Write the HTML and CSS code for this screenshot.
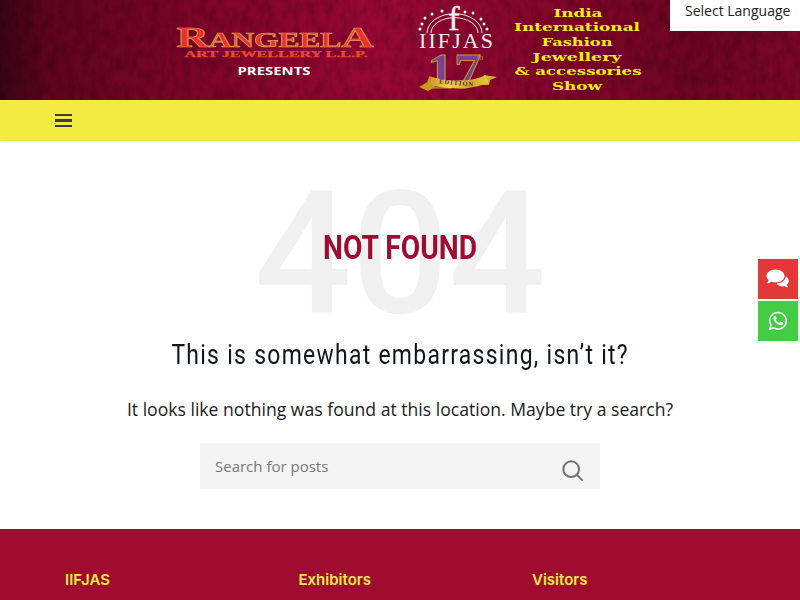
FILE: index.html
```html
<!DOCTYPE html>
<html>
<head>
  <title>Not Found</title>
  <meta name="viewport" content="width=device-width, initial-scale=1">
  <link rel="stylesheet" href="styles.css">
</head>
<body>
  <header class="banner">
    <svg class="banner-art" width="800" height="100" viewBox="0 0 800 100">
      <defs>
        <linearGradient id="velvet" x1="0" x2="1" y1="0" y2="0">
          <stop offset="0" stop-color="#3a0416"/>
          <stop offset="0.06" stop-color="#5e041e"/>
          <stop offset="0.25" stop-color="#7e0529"/>
          <stop offset="0.48" stop-color="#980836"/>
          <stop offset="0.7" stop-color="#82062b"/>
          <stop offset="0.86" stop-color="#6c0522"/>
          <stop offset="1" stop-color="#7a0628"/>
        </linearGradient>
        <filter id="grain" x="0" y="0" width="100%" height="100%">
          <feTurbulence type="fractalNoise" baseFrequency="0.12 0.07" numOctaves="4" seed="4"/>
          <feColorMatrix values="0 0 0 0 0  0 0 0 0 0  0 0 0 0 0  1.4 0 0 0 -0.52"/>
        </filter>
        <linearGradient id="gold" x1="0" x2="1" y1="0" y2="0">
          <stop offset="0" stop-color="#c2941c"/>
          <stop offset="0.35" stop-color="#f5d245"/>
          <stop offset="0.7" stop-color="#d0a528"/>
          <stop offset="1" stop-color="#e9c23a"/>
        </linearGradient>
      </defs>
      <rect width="800" height="100" fill="url(#velvet)"/>
      <rect width="800" height="100" filter="url(#grain)" opacity="0.3"/>

      <text class="logo-name" x="275" y="47" text-anchor="middle" textLength="197" lengthAdjust="spacingAndGlyphs">RangeelA</text>
      <text class="logo-sub" x="276" y="56.500" text-anchor="middle" textLength="183" lengthAdjust="spacingAndGlyphs">ART JEWELLERY L.L.P.</text>
      <text class="logo-presents" x="274" y="74.500" text-anchor="middle" textLength="73" lengthAdjust="spacingAndGlyphs">PRESENTS</text>

      <g fill="none" stroke="#efe6e6" stroke-width="1">
        <path d="M427 33a27 19 0 0 1 55 0"/>
        <path d="M431 33a23 15 0 0 1 47 0"/>
      </g>
      <g fill="#fff">
        <circle cx="420" cy="29" r="1.500"/><circle cx="422" cy="24" r="1.500"/><circle cx="425" cy="18" r="1.500"/>
        <circle cx="432" cy="14" r="1.500"/><circle cx="442" cy="11" r="1.500"/><circle cx="465" cy="12" r="1.500"/>
        <circle cx="473" cy="13" r="1.500"/><circle cx="481" cy="19" r="1.500"/><circle cx="484" cy="24" r="1.500"/>
        <circle cx="487" cy="29" r="1.500"/>
      </g>
      <text class="logo-f" x="454" y="30" text-anchor="middle">f</text>
      <text class="logo-iifjas" x="456" y="48" text-anchor="middle" textLength="74" lengthAdjust="spacing">IIFJAS</text>
      <text class="logo-seventeen" x="454" y="88" text-anchor="middle" textLength="54" lengthAdjust="spacingAndGlyphs">17</text>
      <text class="logo-th" x="477" y="60">th</text>
      <path d="M419 87l12-7 4 7-7 4z" fill="#c9981f"/>
      <path d="M484 75l13 2-7 3-1 5-8 0z" fill="#d9ad2c"/>
      <path d="M428 80C440 84 455 85 468 84C478 83 482 81 487 79" fill="none" stroke="url(#gold)" stroke-width="8"/>
      <text class="logo-edition" x="456" y="85" text-anchor="middle" transform="rotate(5 456 85)" textLength="34" lengthAdjust="spacing">EDITION</text>

      <text class="show-line" x="578" y="17" text-anchor="middle" textLength="49" lengthAdjust="spacingAndGlyphs">India</text>
      <text class="show-line" x="577" y="31" text-anchor="middle" textLength="126" lengthAdjust="spacingAndGlyphs">International</text>
      <text class="show-line" x="577" y="46" text-anchor="middle" textLength="71" lengthAdjust="spacingAndGlyphs">Fashion</text>
      <text class="show-line" x="577" y="61" text-anchor="middle" textLength="89" lengthAdjust="spacingAndGlyphs">Jewellery</text>
      <text class="show-line" x="578" y="75" text-anchor="middle" textLength="127" lengthAdjust="spacingAndGlyphs">&amp; accessories</text>
      <text class="show-line" x="577" y="90" text-anchor="middle" textLength="50" lengthAdjust="spacingAndGlyphs">Show</text>
    </svg>
    <div class="language">Select Language</div>
  </header>

  <nav class="menu-bar">
    <button class="menu-toggle" aria-label="Menu">
      <span></span><span></span><span></span>
    </button>
  </nav>

  <main class="not-found">
    <div class="title-wrap">
      <div class="big-404">404</div>
      <h1>NOT FOUND</h1>
    </div>
    <h2>This is somewhat embarrassing, isn’t it?</h2>
    <p>It looks like nothing was found at this location. Maybe try a search?</p>
    <form class="search" autocomplete="off">
      <input type="text" placeholder="Search for posts">
      <svg width="21" height="21" viewBox="0 0 24 24" fill="none" stroke="#6f6f6f" stroke-width="2.200">
        <circle cx="10.500" cy="10.500" r="9"/>
        <path d="M17 17l6 6" stroke-linecap="round"/>
      </svg>
    </form>
  </main>

  <footer class="site-footer">
    <h4>IIFJAS</h4>
    <h4>Exhibitors</h4>
    <h4>Visitors</h4>
  </footer>

  <div class="side-buttons">
    <a class="side-btn chat" href="#">
      <svg width="24" height="20" viewBox="0 0 24 20" fill="#fff">
        <path d="M9.500 0.500C4.500 0.500 0.500 3.400 0.500 7c0 1.600 0.800 3 2.100 4.100C2.300 12.500 1.500 13.500 0.700 14.300c1.800 0 3.500-0.700 4.600-1.500 1.300 0.500 2.700 0.700 4.200 0.700 5 0 9-2.900 9-6.500S14.500 0.500 9.500 0.500z"/>
        <path d="M19.700 7.300c0 4-3.900 7-9.100 7.300 1.100 1.700 3.200 2.800 5.600 2.800 0.800 0 1.600-0.100 2.300-0.400 0.900 0.700 2.200 1.300 3.800 1.300-0.700-0.700-1.300-1.500-1.600-2.600 1.300-1 2.100-2.300 2.100-3.800 0-1.900-1.200-3.500-3.100-4.600z"/>
      </svg>
    </a>
    <a class="side-btn whatsapp" href="#">
      <svg width="20" height="20" viewBox="0 0 24 24" fill="#fff">
        <path d="M12 1C6 1 1.200 5.800 1.200 11.800c0 1.900.5 3.800 1.500 5.400L1 23l6-1.600c1.600.9 3.300 1.300 5 1.300 6 0 10.900-4.900 10.900-10.900C22.900 5.800 18 1 12 1zm0 19.800c-1.600 0-3.200-.4-4.600-1.300l-.3-.2-3.500.9.900-3.400-.2-.4c-.9-1.400-1.400-3-1.400-4.700 0-4.900 4-8.900 9-8.900s9 4 9 8.900-4.100 9-8.900 9.100z"/>
        <path d="M8.300 6.800c-.2 0-.6.100-.9.400-.3.400-1.200 1.100-1.200 2.800s1.200 3.300 1.400 3.500c.2.200 2.400 3.700 5.900 5 2.900 1.100 3.500.9 4.100.8.600-.1 2-.8 2.300-1.600.3-.8.300-1.400.2-1.600-.1-.1-.3-.2-.7-.4l-2.300-1.100c-.3-.1-.5-.2-.8.200l-1.100 1.300c-.2.200-.4.300-.8.100-.3-.2-1.400-.5-2.700-1.700-1-.9-1.700-2-1.900-2.300-.2-.3 0-.5.100-.7l.5-.6c.2-.2.200-.3.300-.6.100-.2.100-.4 0-.6l-1-2.500c-.3-.6-.5-.6-.8-.6z" transform="translate(1.300 0.600) scale(.84)"/>
      </svg>
    </a>
  </div>
</body>
</html>
```

FILE: styles.css
```css
* {
  box-sizing: border-box;
}

html, body {
  margin: 0;
  padding: 0;
}

body {
  position: relative;
  font-family: "Open Sans", sans-serif;
  color: #111;
  background: #fff;
}

.banner {
  position: relative;
  height: 100px;
}

.banner-art {
  display: block;
}

.logo-name {
  font-family: "Liberation Serif", serif;
  font-size: 30px;
  font-weight: bold;
  font-variant: small-caps;
  fill: #f02e30;
  stroke: #dca24c;
  stroke-width: .7px;
}

.logo-sub {
  font-family: "Liberation Serif", serif;
  font-size: 8px;
  font-weight: bold;
  fill: #e84a2c;
  stroke: #e84a2c;
  stroke-width: .25px;
}

.logo-presents {
  font-family: "Open Sans", sans-serif;
  font-size: 10px;
  font-weight: bold;
  fill: #fff;
}

.logo-f {
  font-family: "Liberation Serif", serif;
  font-size: 34px;
  fill: #f5f0f0;
  stroke: #f5f0f0;
  stroke-width: .4px;
}

.logo-iifjas {
  font-family: "Liberation Serif", serif;
  font-size: 22px;
  fill: #f2eded;
}

.logo-seventeen {
  font-family: "Liberation Serif", serif;
  font-size: 50px;
  font-weight: bold;
  fill: #7b3f98;
  stroke: #c19a2e;
  stroke-width: 1px;
}

.logo-th {
  font-family: "Liberation Serif", serif;
  font-size: 8px;
  fill: #b88b3a;
}

.logo-edition {
  font-family: "Liberation Serif", serif;
  font-size: 6.500px;
  font-weight: bold;
  fill: #4f2468;
}

.show-line {
  font-family: "DejaVu Serif", serif;
  font-size: 11.500px;
  font-weight: bold;
  fill: #f6ee12;
}

.language {
  position: absolute;
  top: 0;
  right: 0;
  width: 130px;
  height: 31px;
  padding: 1px 0 0 15px;
  background: #fff;
  font-size: 14px;
  line-height: 20px;
  color: #222;
}

.menu-bar {
  display: flex;
  align-items: center;
  height: 41px;
  padding-left: 55px;
  background: #f3ea42;
  box-shadow: 0 1px 3px rgba(0, 0, 0, .06);
}

.menu-toggle {
  display: flex;
  flex-direction: column;
  gap: 3px;
  padding: 0;
  border: 0;
  background: none;
}

.menu-toggle span {
  display: block;
  width: 17px;
  height: 2.500px;
  background: #3c3c3c;
}

.not-found {
  display: flex;
  flex-direction: column;
  align-items: center;
  height: 388px;
  padding-top: 33px;
}

.title-wrap {
  position: relative;
  width: 400px;
  height: 161px;
  text-align: center;
}

.big-404 {
  font-family: Roboto, sans-serif;
  font-size: 171px;
  font-weight: 500;
  line-height: 160px;
  color: #f0f0f0;
}

.title-wrap h1 {
  position: absolute;
  top: 51px;
  left: 0;
  right: 0;
  margin: 0;
  font-family: Roboto, sans-serif;
  font-size: 34px;
  font-weight: bold;
  line-height: 44px;
  color: #a00c30;
  transform: scaleX(.83);
}

h2 {
  margin: 0;
  font-family: Roboto, sans-serif;
  font-size: 27px;
  font-weight: normal;
  line-height: 40px;
  letter-spacing: 1.500px;
  color: #0e1420;
  white-space: nowrap;
  transform: scaleX(.85);
}

.not-found p {
  margin: 22px 0 0;
  font-size: 17.600px;
  line-height: 24px;
  color: #1b1b1b;
}

.search {
  display: flex;
  justify-content: space-between;
  align-items: center;
  width: 400px;
  height: 46px;
  margin-top: 22px;
  padding: 0 17px 0 15px;
  background: #f4f4f4;
}

.search input {
  flex: 1;
  border: 0;
  outline: 0;
  padding: 0;
  background: none;
  font-family: "Open Sans", sans-serif;
  font-size: 15px;
}

.search input::placeholder {
  color: #777;
  opacity: 1;
}

.search svg {
  margin-top: 9px;
}

.site-footer {
  display: grid;
  grid-template-columns: repeat(3, 233.500px);
  height: 71px;
  padding: 41px 0 0 65px;
  background: #a00c30;
  overflow: hidden;
}

.site-footer h4 {
  margin: 0;
  font-family: Inter, sans-serif;
  font-size: 15px;
  font-weight: 600;
  line-height: 20px;
  color: #f3ea42;
}

.side-buttons {
  position: absolute;
  top: 259px;
  right: 2px;
  display: flex;
  flex-direction: column;
  gap: 2px;
}

.side-btn {
  display: flex;
  align-items: center;
  justify-content: center;
  width: 40px;
  height: 40px;
}

.chat {
  background: #e23838;
}

.whatsapp {
  background: #45cc45;
}
```
